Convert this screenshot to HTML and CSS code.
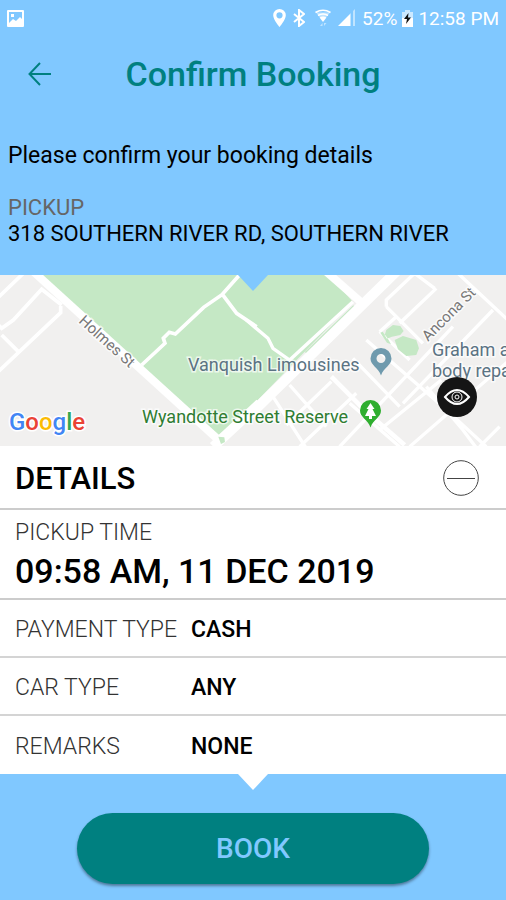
FILE: index.html
```
<!DOCTYPE html>
<html lang="en">
<head>
    <meta charset="utf-8">
    <meta name="viewport" content="width=device-width, initial-scale=1">
    <title>Confirm Booking</title>
    <link rel="stylesheet" href="styles.css">
</head>
<body>
    <div class="status-bar">
        <svg class="status-picture" width="17" height="17" viewBox="0 0 17 17">
            <path fill="#fff" fill-rule="evenodd" d="M1 0h15a1 1 0 0 1 1 1v15a1 1 0 0 1-1 1H1a1 1 0 0 1-1-1V1a1 1 0 0 1 1-1zM2 2v11l4-4 3 2 4-4 2 2V2zM4 4h3v3H4z"/>
        </svg>
        <svg width="13" height="18" viewBox="0 0 13 18">
            <path fill="#fff" fill-rule="evenodd" d="M6.500 0A6.300 6.300 0 0 0 .2 6.300C.2 11 6.500 18 6.500 18s6.300-7 6.300-11.700A6.300 6.300 0 0 0 6.500 0zm0 3.200a3.100 3.100 0 1 1 0 6.200 3.100 3.100 0 0 1 0-6.200z"/>
        </svg>
        <svg class="bluetooth" width="12" height="18" viewBox="0 0 12 18">
            <path fill="none" stroke="#fff" stroke-width="2" d="M1 5l10 8-5 4V1l5 4L1 13"/>
        </svg>
        <svg class="wifi" width="16" height="18" viewBox="0 0 16 18">
            <path fill="none" stroke="#fff" stroke-width="1.600" d="M.5 3.500Q8-1 15.500 3.500M3 6.500q5-3 10 0"/>
            <path fill="#fff" d="M4.500 8.500q3.500-2 7 0L8 13z"/>
            <path fill="#fff" opacity=".5" d="M1 3.500h14L9.500 10h-3zM5 17l2.500-3v3zM9 14h2.500L9 17z"/>
        </svg>
        <svg width="17" height="18" viewBox="0 0 17 18">
            <path fill="#fff" d="M0 17l4-4v4zM4 13l4-4v8H4zM8 9l4-4v12H8z"/>
            <path fill="#fff" opacity=".5" d="M12 5l1-1v13h-1zM15 2l2-2v17h-2z"/>
        </svg>
        <span>52%</span>
        <svg class="battery" width="11" height="17" viewBox="0 0 11 17">
            <path fill="#fff" opacity=".6" d="M3 0h5v2h3v7H0V2h3z"/>
            <path fill="#fff" d="M0 8h11v9H0z"/>
            <path fill="#111" d="M6.500 3L2 9h3l-1 5 5-6.500H6z"/>
        </svg>
        <span>12:58 PM</span>
    </div>

    <header class="header">
        <button class="back" type="button" aria-label="Back">
            <svg width="24" height="24" viewBox="0 0 24 24">
                <path fill="none" stroke="#008080" stroke-width="2" d="M23 12H2M12 1L1.500 12 12 23"/>
            </svg>
        </button>
        <h1>Confirm Booking</h1>
    </header>

    <section class="summary">
        <p class="intro">Please confirm your booking details</p>
        <p class="pickup">Pickup</p>
        <p class="address">318 Southern River Rd, Southern River</p>
    </section>

    <section class="map">
        <svg class="map-canvas" viewBox="0 0 506 171" preserveAspectRatio="xMidYMid slice">
            <rect width="506" height="171" fill="#f1f0ef"/>
            <path fill="#c5e8c5" d="M41 0l172 155 6 5 32-28L353 27 329 0z"/>

            <!-- west side streets -->
            <g transform="scale(.3333) translate(0 -45)" fill="none" stroke="#fff" stroke-width="11">
                <path stroke-width="24" d="M95 30L650 535"/>
                <path d="M-5 112L70 40M185 135L125 88 40 180 5 205-10 190M5 225l50 50M182 138v20L-5 335"/>
                <path d="M425 315l70-65-5-15 18-18 18 5 85-80 55-38 55-62M665 100l45 60 60 40"/>
                <path stroke-width="30" d="M640 560l140-130"/>
                <path fill="#c5e8c5" stroke="none" d="M655 530l18 2 2 14-12 6z"/>
            </g>

            <!-- east side streets -->
            <g transform="scale(.3333) translate(759 -45)" fill="none" stroke="#fff" stroke-width="10">
                <path d="M-20 180l65 55 15 30 50 35 190-175"/>
                <path stroke="#c5e8c5" stroke-width="12" d="M160 280l145-140"/>
                <path stroke-width="30" d="M-10 465L435 30"/>
                <path stroke-width="24" d="M220 35l120 105"/>
                <path d="M485 40l60 45M615 40l150 140M550 85L440 190M400 140l110 110M400 140V120l90-85M720 150L450 430"/>
                <path stroke-width="14" d="M235 350l110 110 110 95"/>
                <path d="M300 295l140 145M340 240l230 200M380 215l50-45M380 215l90 85M60 410l100 155M110 375l110 125M100 495L235 365M140 560L310 400M260 560L600 200M380 510l185-150M470 560L770 300M570 440l130 120M680 560l60-60M520 380l110 130 45 60M440 560L290 430"/>
                <path fill="#c5e8c5" stroke="none" d="M400 210l20-15 22 3 10 15-10 12-25 5-15 6-7-10zM425 240l25-12 40 12 8 25-8 20-30 3-25-20zM382 218l20 30 12 5-10-18-15-20z"/>
            </g>

            <g class="poi">
                <text x="188" y="96">Vanquish Limousines</text>
                <text x="432" y="81">Graham a</text>
                <text x="432" y="102">body repa</text>
                <text class="reserve" x="142" y="148">Wyandotte Street Reserve</text>
                <text class="street" transform="translate(78 47) rotate(42)">Holmes St</text>
                <text class="street" transform="translate(428 67) rotate(-45)">Ancona St</text>
            </g>

            <path fill="#6f9aad" fill-rule="evenodd" d="M381 73a10.500 10.500 0 0 0-10.500 10.500c0 7 8 9 10.500 17 2.500-8 10.500-10 10.500-17A10.500 10.500 0 0 0 381 73zm0 6a4.500 4.500 0 1 1 0 9 4.500 4.500 0 0 1 0-9z"/>
            <path fill="#2fae2f" d="M370.500 125A10.500 10.500 0 0 0 360 135.500c0 7 8 9 10.500 17 2.500-8 10.500-10 10.500-17A10.500 10.500 0 0 0 370.500 125z"/>
            <path fill="#fff" d="M370.500 128l4 6h-2l3.500 7h-4v3h-3v-3h-4l3.500-7h-2z"/>

            <text class="google" x="9" y="155"><tspan fill="#4285f4">G</tspan><tspan fill="#ea4335">o</tspan><tspan fill="#fbbc05">o</tspan><tspan fill="#4285f4">g</tspan><tspan fill="#34a853">l</tspan><tspan fill="#ea4335">e</tspan></text>
        </svg>
        <button class="view" type="button" aria-label="Street view">
            <svg width="28" height="18" viewBox="0 0 28 18" fill="none" stroke="#fff">
                <path stroke-width="2" d="M2 9Q14-5 26 9 14 23 2 9z"/>
                <circle cx="14" cy="9" r="5"/>
                <circle cx="14" cy="9" r="2"/>
            </svg>
        </button>
    </section>

    <section class="details">
        <div class="details-head">
            <h2>Details</h2>
            <button class="toggle" type="button" aria-label="Collapse details">
                <svg width="36" height="36" viewBox="0 0 36 36" fill="none" stroke="#444">
                    <circle cx="18" cy="18" r="17.300"/>
                    <path d="M4 18.500h28"/>
                </svg>
            </button>
        </div>
        <div class="time">
            <p class="label">Pickup time</p>
            <p class="value">09:58 AM, 11 DEC 2019</p>
        </div>
        <dl>
            <div class="row"><dt>Payment type</dt><dd>Cash</dd></div>
            <div class="row"><dt>Car type</dt><dd>Any</dd></div>
            <div class="row"><dt>Remarks</dt><dd>None</dd></div>
        </dl>
    </section>

    <footer class="footer">
        <button class="book" type="button">BOOK</button>
    </footer>
</body>
</html>
```
FILE: styles.css
```
* {
    box-sizing: border-box;
}
body {
    margin: 0;
    min-height: 100vh;
    background-color: #80c8ff;
    color: #000;
    font-family: Roboto, sans-serif;
    font-size: 23px;
}
h1, h2, p, dl, dd {
    margin: 0;
}
button {
    padding: 0;
    border: 0;
    background: none;
    font-family: inherit;
    cursor: pointer;
}
svg {
    display: block;
}

.status-bar {
    display: flex;
    align-items: center;
    height: 36px;
    padding: 0 7px;
    gap: 7px;
    color: #fff;
    font-size: 19px;
}
.status-picture {
    margin-right: auto;
}
.wifi {
    margin-left: 3px;
}
.battery {
    margin: 0 -2px;
}

.header {
    display: grid;
    grid-template-columns: 80px 1fr 80px;
    align-items: center;
    height: 76px;
}
.back {
    justify-self: center;
}
.header h1 {
    color: #008080;
    font-size: 34px;
    font-weight: 500;
    line-height: 40px;
    text-align: center;
    white-space: nowrap;
}

.summary {
    height: 163px;
    padding: 31px 8px 0;
    line-height: 26px;
}
.pickup {
    margin-top: 26px;
    color: #666;
    font-size: 22px;
    text-transform: uppercase;
}
.address {
    font-size: 22px;
    text-transform: uppercase;
}

.map {
    position: relative;
    height: 171px;
}
.map::before,
.footer::before {
    content: "";
    position: absolute;
    top: 0;
    left: 50%;
    margin-left: -15px;
    border: 15px solid transparent;
    border-top: 16px solid #80c8ff;
    border-bottom: 0;
}
.map-canvas {
    width: 100%;
    height: 100%;
}
.poi text {
    fill: #5b7383;
    stroke: #fff;
    stroke-width: 3px;
    stroke-opacity: 0.7;
    paint-order: stroke;
    font-size: 18px;
}
.poi .reserve {
    fill: #2f7d32;
}
.poi .street {
    fill: #777;
    font-size: 15px;
}
.google {
    stroke: #fff;
    stroke-width: 3px;
    paint-order: stroke;
    font-size: 24px;
    font-weight: 500;
}
.view {
    position: absolute;
    right: 29px;
    bottom: 29px;
    display: grid;
    place-items: center;
    width: 40px;
    height: 40px;
    border-radius: 50%;
    background-color: #151515;
}

.details {
    background-color: #fff;
}
.details-head {
    display: flex;
    align-items: center;
    justify-content: space-between;
    height: 64px;
    padding: 2px 27px 0 15px;
    border-bottom: 2px solid #ccc;
}
.details-head h2 {
    font-size: 31px;
    font-weight: 500;
    text-transform: uppercase;
}
.time {
    height: 90px;
    padding: 9px 15px 0;
    border-bottom: 2px solid #ccc;
}
.label,
.row dt {
    color: #333;
    font-weight: 300;
    text-transform: uppercase;
}
.label {
    line-height: 28px;
}
.value {
    font-size: 34px;
    font-weight: 500;
    line-height: 48px;
}
.row {
    display: grid;
    grid-template-columns: 176px 1fr;
    align-items: center;
    height: 58px;
    padding: 2px 15px 0;
    border-bottom: 2px solid #d4d4d4;
}
.row:last-child {
    border-bottom: 0;
}
.row dd {
    font-weight: 500;
    text-transform: uppercase;
}

.footer {
    position: relative;
    padding: 39px 77px 17px;
}
.footer::before {
    border-top-color: #fff;
}
.book {
    width: 100%;
    height: 71px;
    border-radius: 36px;
    background-color: #008080;
    box-shadow: 0 2px 3px rgba(0, 0, 0, 0.4);
    color: #80c8ff;
    font-size: 28px;
    font-weight: 500;
}
```
